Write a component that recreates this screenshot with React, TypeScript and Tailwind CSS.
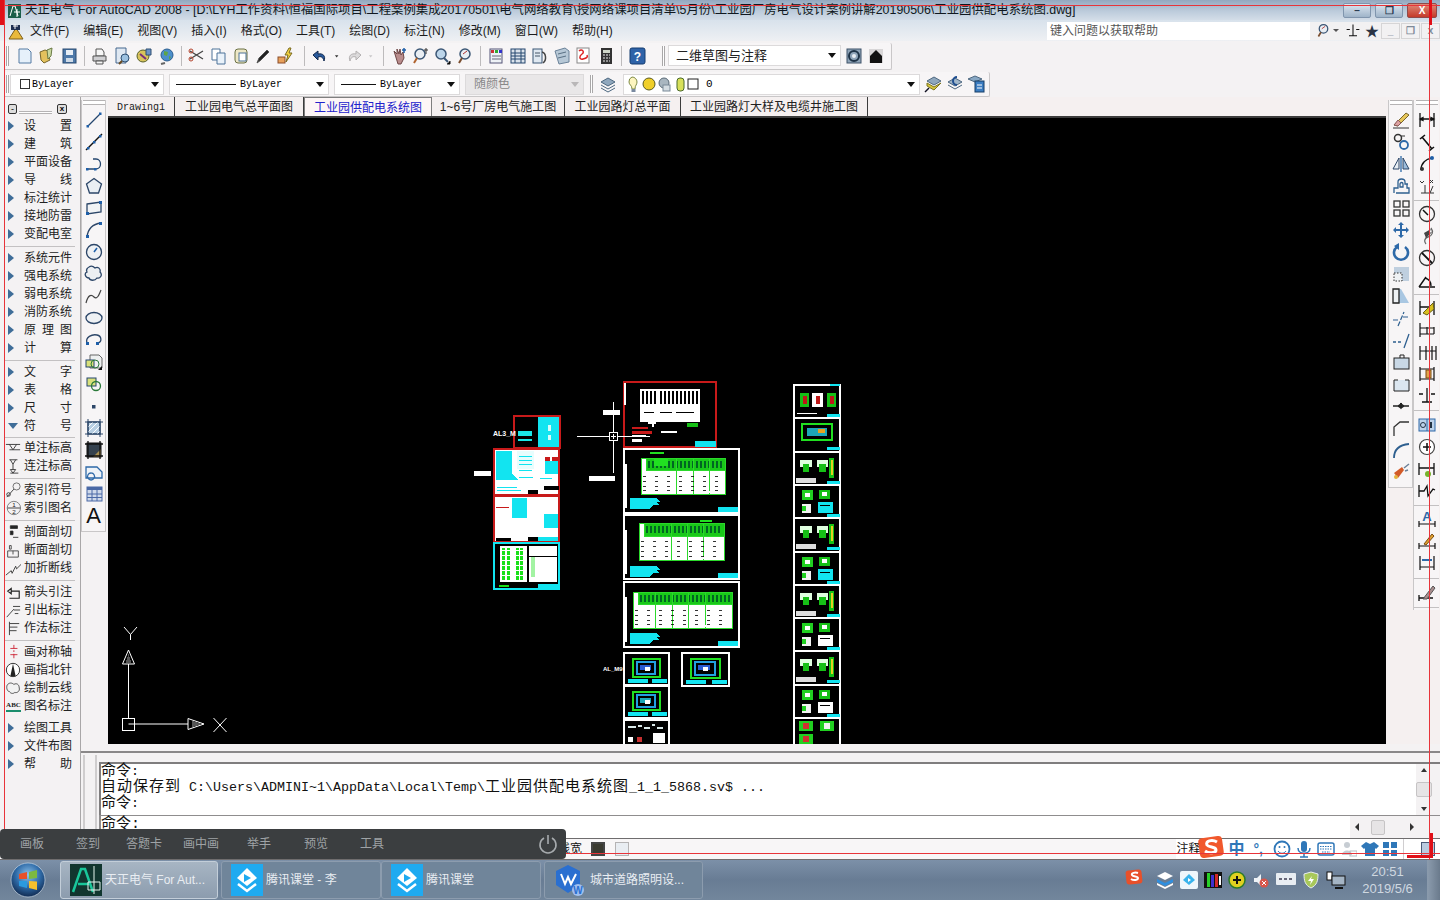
import React from 'react';

const UI = "[font-family:'Liberation_Sans','Noto_Sans_CJK_SC',sans-serif]";
const MONO = "[font-family:'Liberation_Mono','Noto_Sans_CJK_SC',monospace]";

const D = '#24466e';
const B = '#1f5fa8';

// toolbar glyphs, all on a 20x20 box
const glyphs: Record<string, React.ReactNode> = {
    new: <path d="M4 3h9l3 3v11H4z" fill="#e6f0fa" stroke="#557ba3" />,
    open: <><path d="M3 6l5-2 3 1 2 9-6 3-3-3z" fill="#e3c15d" stroke="#77662c" /><path d="M10 4l5-2-1 8-3 3z" fill="#c9d8a0" stroke="#6b7b45" /></>,
    save: <><rect x="4" y="3" width="13" height="14" fill="#4d78a8" stroke="#2a4b70" /><rect x="7" y="4" width="7" height="5" fill="#e8eef5" /><rect x="7" y="12" width="7" height="4" fill="#cfdbe8" /></>,
    print: <><path d="M6 3h6l2 3v4H6z" fill="#f6f6f6" stroke="#555" /><path d="M3 10h13v5H3z" fill="#cfcfd2" stroke="#555" /><path d="M6 15h7v3H6z" fill="#f5f5f5" stroke="#555" /></>,
    preview: <><path d="M4 2h10v15H4z" fill="#dfe8f2" stroke="#46698f" /><circle cx="13" cy="12" r="4" fill="#9cc1e0" stroke="#2f4e70" /><path d="M10 15l-3 3" stroke="#6b4b20" strokeWidth="2" /></>,
    publish: <><circle cx="9" cy="10" r="6" fill="#d9c45b" stroke="#58602c" /><path d="M12 3h5v6h-5z" fill="#6d94c6" stroke="#2f4e70" /><path d="M6 8l6 5" stroke="#7a2d7a" strokeWidth="2" /></>,
    globe: <><circle cx="11" cy="9" r="6" fill="#4c8fcc" stroke="#2a5d8f" /><path d="M8 5l4 1-1 4-3-1zM13 10l2 1-2 3z" fill="#5ea547" /><path d="M9 17l-4 1" stroke="#666" strokeWidth="2" /></>,
    cut: <><path d="M3 5l13 8M3 13l13-8" stroke="#444" strokeWidth="1.3" /><circle cx="4" cy="5" r="2" fill="none" stroke="#b4452f" /><circle cx="4" cy="13" r="2" fill="none" stroke="#b4452f" /></>,
    copy: <><path d="M3 3h8v11H3z" fill="#fff" stroke="#4c7399" /><path d="M8 7h8v11H8z" fill="#eaf2fa" stroke="#4c7399" /></>,
    paste: <><rect x="4" y="3" width="12" height="14" rx="3" fill="#eee8c7" stroke="#6b7045" /><rect x="8" y="7" width="7" height="8" fill="#fff" stroke="#4c7399" /></>,
    match: <path d="M4 17l2-5 8-8 2 2-8 8z" fill="#222" stroke="#555" />,
    bolt: <><rect x="3" y="11" width="7" height="6" fill="#e9a15b" stroke="#8a4d2a" /><path d="M14 2l-4 7h3l-2 7 6-9h-3l2-5z" fill="#f2d13f" stroke="#7a6a20" /></>,
    undo: <path d="M14 15c2-5-1-8-6-7V5L3 9l5 5v-3c3-1 5 0 6 4z" fill="#2a5a9c" stroke="#12294d" />,
    caret: <path d="M7 9h5l-2.500 3z" fill="#333" />,
    redo: <path d="M6 15c-2-5 1-8 6-7V5l5 4-5 5v-3c-3-1-5 0-6 4z" fill="#dcdadb" stroke="#b3b0b1" />,
    caretOff: <path d="M7 9h5l-2.500 3z" fill="#c9c7c8" />,
    pan: <><path d="M5 5l3 3V3l2 5 1-5 1 6 2-3 1 6-3 6H9z" fill="#b98c8c" stroke="#6d4646" /><path d="M15 2v5M13 4h4" stroke={B} strokeWidth="1.500" /></>,
    zoomRt: <><circle cx="9" cy="8" r="5" fill="#e9eef3" stroke="#3b5675" strokeWidth="1.500" /><path d="M6 12l-3 5" stroke="#b0632e" strokeWidth="2" /><path d="M15 2v6M13 4h4" stroke="#333" /></>,
    zoomWin: <><circle cx="8" cy="8" r="5" fill="#bcd5ea" stroke="#3b5675" strokeWidth="1.500" /><path d="M11 12l4 4" stroke="#3b5675" strokeWidth="2" /><path d="M14 18h3v-3" stroke="#111" /></>,
    zoomPrev: <><circle cx="10" cy="8" r="5" fill="#e9eef3" stroke="#3b5675" strokeWidth="1.500" /><path d="M7 12l-3 5" stroke="#7a4d2e" strokeWidth="2" /><path d="M8 8l4-3" stroke="#b02f2f" /></>,
    prop: <><rect x="4" y="3" width="12" height="14" fill="#eef2f6" stroke="#557" /><rect x="5" y="4" width="3" height="3" fill="#c33" /><rect x="9" y="4" width="3" height="3" fill="#3a3" /><rect x="13" y="4" width="3" height="3" fill="#33c" /><path d="M6 10h9M6 13h9" stroke="#667" /></>,
    dc: <><rect x="3" y="3" width="14" height="14" fill="#dbe3ec" stroke={D} /><path d="M3 7h14M3 10h14M3 13h14M7 3v14M13 3v14" stroke={D} /></>,
    palette: <><rect x="3" y="3" width="9" height="14" fill="#dfe8f1" stroke="#3b5675" /><path d="M12 6c4 1 5 8 1 11" fill="none" stroke="#444" strokeWidth="1.500" /><path d="M5 7h5M5 10h5" stroke="#456" /></>,
    sheet: <><path d="M3 5l10-3 4 3v11l-10 2z" fill="#b7c8d6" stroke="#6b8299" /><path d="M6 8l8-2M6 12l8-2" stroke="#5a7084" /></>,
    markup: <><rect x="3" y="2" width="12" height="15" fill="#fff" stroke="#888" /><path d="M5 5c3-3 6 1 3 3s-3 6 1 5 5-2 4-4" fill="none" stroke="#d22" strokeWidth="1.500" /></>,
    calc: <><rect x="5" y="2" width="11" height="16" fill="#333" /><rect x="7" y="4" width="7" height="3" fill="#cfd6c8" /><path d="M7 9h2M10 9h2M13 9h1M7 12h2M10 12h2M13 12h1M7 15h2M10 15h2M13 15h1" stroke="#eee" /></>,
    help: <><rect x="3" y="2" width="15" height="16" rx="2" fill="#2f63a8" stroke="#153c70" /><text x="10.500" y="15" textAnchor="middle" fontSize="12" fontWeight="700" fill="#fff" fontFamily="Liberation Sans">?</text></>,
    gear: <><rect x="3" y="3" width="14" height="14" fill="#8fa4b8" stroke="#3e5368" /><circle cx="10" cy="10" r="5" fill="none" stroke="#1f3347" strokeWidth="2" /><circle cx="10" cy="10" r="2" fill="#e8edf2" /></>,
    home: <><rect x="3" y="3" width="14" height="14" fill="#d8d6d7" /><path d="M4 10l6-6 6 6v7H4z" fill="#111" /></>,
    layerStack: <><path d="M10 4l7 4-7 4-7-4z" fill="#8fa7bd" stroke="#4d6880" /><path d="M3 11l7 4 7-4" fill="none" stroke="#4d6880" /><path d="M3 14l7 4 7-4" fill="none" stroke="#4d6880" /></>,
    layerYellow: <><path d="M11 3l7 4-7 4-7-4z" fill="#8fa7bd" stroke="#4d6880" /><path d="M4 9l7 4 7-4-7 7-7-4z" fill="#d9c83c" stroke="#7b7420" /><path d="M2 18l4-4" stroke="#112" strokeWidth="1.500" /></>,
    layerPrev: <><path d="M10 4l7 4-7 4-7-4z" fill="#9fb5c8" stroke="#4d6880" /><path d="M3 11l7 4 7-4" fill="none" stroke="#4d6880" /><path d="M12 3a4 4 0 1 0 0 8" fill="none" stroke="#1f4e90" strokeWidth="2" /></>,
    layerDoc: <><path d="M8 2l7 3-7 3-7-3z" fill="#88a8c4" stroke="#4d6880" /><rect x="8" y="7" width="9" height="11" fill="#3b7dc1" stroke="#173e66" /><path d="M10 11h5M10 14h5" stroke="#fff" /></>,

    // left drawing strip
    line: <><path d="M4 16L16 4" stroke={D} strokeWidth="1.300" fill="none" /><rect x="2.500" y="15" width="2.500" height="2.500" fill={B} /><rect x="15" y="2.500" width="2.500" height="2.500" fill={B} /></>,
    xline: <><path d="M2 18L18 2" stroke="#111" strokeWidth="1.500" /><rect x="3" y="15" width="2.500" height="2.500" fill={B} /><rect x="15" y="3" width="2.500" height="2.500" fill={B} /><rect x="9" y="9" width="2.500" height="2.500" fill={B} /></>,
    pline: <><path d="M3 15h9c6 0 6-10 0-10H9" fill="none" stroke={D} strokeWidth="1.300" /><rect x="2" y="14" width="2.500" height="2.500" fill={B} /><rect x="10" y="14" width="2.500" height="2.500" fill={B} /></>,
    polygon: <path d="M10 2.500l7.500 5.500-3 9h-9l-3-9z" fill="#e9eef3" stroke="#2c4668" strokeWidth="1.300" />,
    rect: <><path d="M3 6l14-2v10l-14 2z" fill="#f1f3f5" stroke="#2c4668" strokeWidth="1.300" /><rect x="15" y="3" width="3" height="3" fill={B} /><rect x="2" y="14" width="3" height="3" fill={B} /></>,
    arc: <><path d="M3 17C4 8 9 4 17 3" fill="none" stroke="#2c4668" strokeWidth="1.300" /><rect x="2" y="15" width="3" height="3" fill={B} /><rect x="15" y="2" width="3" height="3" fill={B} /></>,
    circle: <><circle cx="10" cy="10" r="7.500" fill="#eef1f4" stroke="#2c4668" strokeWidth="1.300" /><path d="M10 10l3-4" stroke={B} strokeWidth="1.500" /></>,
    cloud: <path d="M5 3c3-2 5 0 6 1 3-2 6 1 5 4 3 3 0 7-3 6-2 3-7 3-8 0-4 0-5-5-2-6-1-2 0-4 2-5z" fill="#eceff2" stroke="#2c4668" strokeWidth="1.300" />,
    spline: <path d="M2 17c2-8 5-9 8-6s5-2 7-7" fill="none" stroke="#444" strokeWidth="1.200" />,
    ellipse: <><ellipse cx="10" cy="10" rx="8" ry="5.500" fill="#eef1f4" stroke="#2c4668" strokeWidth="1.300" /></>,
    ellArc: <><path d="M3 13C1 7 8 4 13 5s5 7 1 8" fill="none" stroke="#2c4668" strokeWidth="1.300" /><rect x="2" y="12" width="3" height="3" fill={B} /><rect x="12" y="12" width="3" height="3" fill={B} /></>,
    insert: <><path d="M6 3h9l3 3v10H6z" fill="#eef0f0" stroke="#666" /><rect x="2" y="8" width="8" height="7" fill="#d8e07a" stroke={D} /><circle cx="11" cy="12" r="4" fill="none" stroke="#2b7a3a" /><path d="M14 18l4-4v4z" fill="#111" /></>,
    block: <><rect x="3" y="4" width="9" height="8" fill="#d8e07a" stroke={D} /><circle cx="12" cy="12" r="4.500" fill="none" stroke="#2b7a3a" strokeWidth="1.300" /></>,
    point: <rect x="8" y="9" width="3.500" height="3.500" fill="#2c4668" />,
    hatch: <><rect x="4" y="4" width="12" height="12" fill="#b9d0e4" stroke="#2c4668" strokeWidth="1.300" /><path d="M4 9l5-5M4 14l10-10M8 16l8-8M13 16l3-3" stroke="#fff" /><path d="M1 4h18M1 16h18M4 1v18M16 1v18" stroke="#2c4668" /></>,
    gradient: <><rect x="3" y="3" width="14" height="14" fill="#35424f" stroke="#111" /><path d="M9 17L17 9v8z" fill="#a88e50" /><path d="M1 4h18M1 16h18M4 1v18M16 1v18" stroke="#111" strokeWidth="1.300" /></>,
    region: <path d="M2 5h11l5 5v6H2z M7 11a3.500 3.500 0 1 0 .1 0" fill="#eef3f8" stroke="#2e69a8" strokeWidth="1.300" />,
    table: <><rect x="3" y="3" width="15" height="14" fill="#cfd9ea" stroke="#4a69a6" /><rect x="3" y="3" width="15" height="3" fill="#4a69a6" /><path d="M3 10h15M3 13.500h15M8 6v11M13 6v11" stroke="#4a69a6" /></>,

    // right modify strip
    erase: <><path d="M3 15L15 3l3 2L7 16z" fill="#e7c65a" stroke="#77662c" /><path d="M3 15l4 1 3-3-3-3z" fill="#dca0a0" stroke="#8a5a5a" /><path d="M2 18h16" stroke="#333" /></>,
    copyObj: <><circle cx="7" cy="6" r="3.500" fill="none" stroke="#333" strokeWidth="1.500" /><circle cx="13" cy="13" r="4" fill="none" stroke="#2e69a8" strokeWidth="1.800" /><path d="M10 4h4" stroke="#333" /></>,
    mirror: <><path d="M10 2v16" stroke="#2e69a8" strokeWidth="1.300" /><path d="M8 4v11H2z" fill="#e9eef3" stroke="#2c4668" /><path d="M12 4v11h6z" fill="#9cbcdb" stroke="#2c4668" /></>,
    offset: <path d="M3 17v-5h4V6c0-4 7-4 7 0v2h3M3 14v-1M5 17h13v-5h-2V8M9 8c0-2 3-2 3 0v3H9z" fill="none" stroke="#2e5f8f" strokeWidth="1.300" />,
    array: <><rect x="3" y="3" width="6" height="6" fill="none" stroke="#333" strokeWidth="1.300" /><rect x="12" y="3" width="6" height="6" fill="none" stroke="#333" strokeWidth="1.300" /><rect x="3" y="12" width="6" height="6" fill="none" stroke="#333" strokeWidth="1.300" /><rect x="12" y="12" width="6" height="6" fill="none" stroke="#333" strokeWidth="1.300" /></>,
    move: <path d="M10 2l3 3h-2v4h4V7l3 3-3 3v-2h-4v4h2l-3 3-3-3h2v-4H5v2l-3-3 3-3v2h4V5H7z" fill="#2e69a8" />,
    rotate: <><path d="M14 5a7 7 0 1 1-8 0" fill="none" stroke="#2e69a8" strokeWidth="2.600" /><path d="M8 1v7L3 4z" fill="#2e69a8" /></>,
    scale: <><rect x="3" y="3" width="15" height="14" fill="#bfcfdf" /><rect x="3" y="9" width="8" height="8" fill="#eef1f4" stroke="#333" strokeDasharray="1.500 1.500" /></>,
    stretch: <><path d="M2 3h8l8 14H2z" fill="#a9c7e2" /><path d="M2 3h6v14H2z" fill="#eef1f4" stroke="#222" strokeWidth="1.300" /></>,
    trim: <path d="M2 12h6M12 9h6M7 18l6-14" stroke="#2e5f8f" strokeWidth="1.200" strokeDasharray="5 1.500" fill="none" />,
    extend: <path d="M2 12h3M7 12h3M13 18l5-14" stroke="#2e5f8f" strokeWidth="1.300" fill="none" />,
    breakP: <><rect x="3" y="6" width="15" height="11" fill="#c9d8e6" stroke="#222" /><path d="M9 6V3h4v3" fill="none" stroke="#222" /></>,
    breakAt: <><path d="M3 6v11h15V6" fill="#dbe6f0" stroke="#222" /><path d="M3 6h4M14 6h4" stroke="#222" /></>,
    join: <path d="M2 10h5M13 10h5M7 10l3-2v4zM13 10l-3-2v4z" fill="#222" stroke="#222" strokeWidth="1.400" />,
    chamfer: <path d="M3 18V9l6-5h9" fill="none" stroke="#333" strokeWidth="1.300" strokeDasharray="0" />,
    fillet: <path d="M3 18c0-9 5-13 15-14" fill="none" stroke="#2e5f8f" strokeWidth="1.800" />,
    explode: <><path d="M3 11l8-6 2 3-6 8z" fill="#d25a28" /><circle cx="5" cy="15" r="2" fill="#e3b23c" /><path d="M13 6l5-4M14 9l3-1" stroke="#6d8299" strokeWidth="1.500" /></>,

    // right dimension strip
    dimLin: <path d="M3 3v14M17 3v14M3 9h14M3 9l3-1.500v3zM17 9l-3-1.500v3z" stroke="#111" strokeWidth="1.300" fill="none" />,
    dimAli: <path d="M3 7l5-4M12 19l5-4M5 5l10 12" stroke="#111" strokeWidth="1.600" fill="none" />,
    dimArc: <><path d="M4 16C4 9 9 5 15 4" fill="none" stroke="#111" strokeWidth="1.500" /><circle cx="15" cy="4" r="2" fill={B} /><circle cx="5" cy="15" r="2" fill="#333" /></>,
    dimOrd: <path d="M4 17h13M8 17V9M13 17l3-7M3 5l2 2 2-2M13 4l3 3M16 4l-3 3" stroke="#333" fill="none" />,
    dimRad: <><circle cx="10" cy="10" r="7.500" fill="none" stroke="#333" strokeWidth="1.300" /><path d="M6 6l5 5" stroke="#111" strokeWidth="1.500" /></>,
    dimJog: <><path d="M14 2c3 4 1 8-3 9s-4 5-2 7" fill="none" stroke="#666" strokeWidth="1.300" /><path d="M7 7l7-4-2 4 3-1-6 6z" fill="#444" /></>,
    dimDia: <><circle cx="10" cy="10" r="7.500" fill="none" stroke="#333" strokeWidth="1.300" /><path d="M5 5l10 10" stroke="#111" strokeWidth="1.800" /></>,
    dimAng: <><path d="M2 17h16M2 17l7-10" stroke="#111" strokeWidth="1.400" fill="none" /><path d="M8 8c4 1 6 4 6 8" fill="none" stroke="#111" strokeWidth="1.300" /></>,
    dimQuick: <><path d="M3 3v14M17 3v14M3 9h14" stroke="#111" strokeWidth="1.300" /><path d="M6 15L16 5l1 6-7 6z" fill="#d8c020" stroke="#6a5f10" /></>,
    dimBase: <path d="M3 3v14M10 7v7M17 7v7M3 8h14M3 14h14" stroke="#111" strokeWidth="1.200" fill="none" />,
    dimCont: <path d="M3 4v14M9 4v14M15 4v14M19 4v14M3 9h16" stroke="#111" strokeWidth="1.200" fill="none" />,
    dimSpace: <><path d="M3 3v14M17 3v14M3 5h14M3 15h14" stroke="#111" strokeWidth="1.200" /><rect x="9" y="6" width="5" height="8" fill="#e3a24a" stroke="#7a4d12" /></>,
    dimBreak: <path d="M10 2v14M5 16h10M2 8h4M14 8h4" stroke="#111" strokeWidth="1.300" fill="none" />,
    tol: <><rect x="2" y="4" width="16" height="12" fill="#bcd2ea" stroke="#2e69a8" /><path d="M10 4v12" stroke="#2e69a8" /><circle cx="6" cy="10" r="2.500" fill="none" stroke="#234" /><path d="M13 7h2v6h-2z" fill="#234" /></>,
    center: <><circle cx="10" cy="10" r="7.500" fill="#fff" stroke="#444" strokeWidth="1.200" /><path d="M10 6v8M6 10h8" stroke="#111" strokeWidth="1.500" /></>,
    inspect: <><path d="M2 4v12M17 4v12M2 9h15" stroke="#111" strokeWidth="1.300" /><circle cx="11" cy="15" r="3" fill="#78b32c" /></>,
    jogLin: <path d="M2 4v12M2 10h5l3-5 1 10 5-7 2 1" stroke="#111" strokeWidth="1.300" fill="none" />,
    dimEditA: <><text x="10" y="12" textAnchor="middle" fontSize="13" fontWeight="700" fill="#2e69a8" fontFamily="Liberation Sans">A</text><path d="M2 12v6M18 12v6M2 15h16" stroke="#111" strokeWidth="1.200" /></>,
    dimEditP: <><path d="M2 12v6M18 12v6M2 15h16" stroke="#111" strokeWidth="1.200" /><path d="M7 13l8-10 2 2-8 9z" fill="#e0a030" stroke="#7a4d12" /></>,
    dimUpd: <><path d="M3 3v14M17 3v14M3 14h14" stroke="#111" strokeWidth="1.200" /><path d="M5 7h10" stroke="#2e69a8" strokeWidth="2" /></>,
    dimStyle: <><path d="M2 12v6M2 15h14" stroke="#111" strokeWidth="1.300" /><path d="M6 16L16 3l2 2-8 11z" fill="#a98e8e" stroke="#555" /></>,
};

function Ic({ n, s = 20 }: { n: string; s?: number }) {
    return <svg width={s} height={s} viewBox="0 0 20 20" className="block shrink-0">{glyphs[n]}</svg>;
}

function Grip() {
    return <div className="flex h-full w-[4px] shrink-0 flex-col items-center py-[3px]"><div className="h-full w-[3px] border-x border-[#a9a7a8] bg-white"></div></div>;
}

function Slots({ names }: { names: string[] }) {
    return (
        <div className="flex items-center gap-[2px]">
            {names.map((n, i) => <Ic key={i} n={n} />)}
        </div>
    );
}

function Sep() {
    return <div className="mx-[5px] h-[20px] w-[1px] shrink-0 bg-[#bdbbbc]"></div>;
}

function Combo({ w, children, caret = true, muted = false }: { w: string; children: React.ReactNode; caret?: boolean; muted?: boolean }) {
    return (
        <div className={`flex h-[21px] shrink-0 items-center justify-between border border-[#dcdadb] px-[4px] ${w} ${muted ? 'bg-[#e9e7e8]' : 'bg-white'}`}>
            <div className="flex items-center">{children}</div>
            {caret && <span className={`h-0 w-0 border-x-[4px] border-t-[5px] border-x-transparent ${muted ? 'border-t-[#b9b7b8]' : 'border-t-[#111]'}`}></span>}
        </div>
    );
}

function WindowButton({ label, red }: { label: string; red?: boolean }) {
    return (
        <div className={`flex h-[15px] items-center justify-center rounded-[2px] border text-[10px] font-bold leading-none ${red ? 'w-[30px] border-[#8f4a4a] bg-[linear-gradient(#e08a78,#c43a2a)] text-white' : 'w-[28px] border-[#8095ad] bg-[linear-gradient(#dce6f0,#9fb4c9)] text-[#2b3d52]'}`}>{label}</div>
    );
}

function TitleBar() {
    return (
        <div className="flex h-[20px] shrink-0 items-center bg-[linear-gradient(#93a8bf,#bccbdb_55%,#d3dde8)] pl-[8px] pr-[3px] pt-[1px]">
            <svg width="13" height="14" viewBox="0 0 13 14" className="shrink-0">
                <rect width="13" height="14" fill="#1b5e4a" />
                <path d="M2 12L5 2h2l3 10M6 8h6M9 5v8" stroke="#fff" fill="none" />
            </svg>
            <span className="ml-[4px] whitespace-nowrap text-[12.400px] text-[#101820]">天正电气 For AutoCAD 2008 - [D:\LYH工作资料\恒福国际项目\工程案例集成20170501\电气网络教育\授网络课项目清单\5月份\工业园厂房电气设计案例讲解20190506\工业园供配电系统图.dwg]</span>
            <div className="ml-auto flex items-center gap-[4px]">
                <WindowButton label="–" />
                <WindowButton label="❐" />
                <WindowButton label="X" red />
            </div>
        </div>
    );
}

const menus = ['文件(F)', '编辑(E)', '视图(V)', '插入(I)', '格式(O)', '工具(T)', '绘图(D)', '标注(N)', '修改(M)', '窗口(W)', '帮助(H)'];

function MenuBar() {
    return (
        <div className="flex h-[21px] shrink-0 items-center bg-[linear-gradient(#d8e2ec,#eef0f3)] pl-[8px]">
            <svg width="16" height="18" viewBox="0 0 16 18" className="shrink-0">
                <path d="M1 17L8 6l7 11z" fill="#e9b93c" stroke="#7d5f1a" />
                <path d="M3 3h9v5H3z" fill="#1f2f52" />
                <path d="M7 2v5M5 4h5" stroke="#fff" />
            </svg>
            <div className="ml-[6px] flex gap-[14px] text-[12px] text-[#1c1c1c]">
                {menus.map(m => <span key={m} className="whitespace-nowrap">{m}</span>)}
            </div>
            <div className="ml-auto flex h-[18px] w-[393px] items-center bg-[#f2f1f2]">
                <div className="flex h-full w-[268px] items-center bg-white pl-[3px] text-[12px] text-[#555]">键入问题以获取帮助</div>
                <div className="ml-[5px] flex items-center gap-[1px]">
                    <Ic n="zoomPrev" s={17} />
                    <span className="h-0 w-0 border-x-[3px] border-t-[3px] border-x-transparent border-t-[#555]"></span>
                    <div className="ml-[5px]"><Ic n="dimBreak" s={16} /></div>
                    <span className="ml-[3px] text-[14px] leading-none text-[#2b3445]">★</span>
                </div>
                <div className="ml-[2px] flex gap-[1px] text-[10px] font-bold leading-none text-[#7f8a99]">
                    <span className="flex h-[16px] w-[19px] items-end justify-center border border-[#d6d5d6] pb-[2px]">_</span>
                    <span className="flex h-[16px] w-[19px] items-center justify-center border border-[#d6d5d6]">❐</span>
                    <span className="flex h-[16px] w-[19px] items-center justify-center border border-[#d6d5d6]">x</span>
                </div>
            </div>
        </div>
    );
}

function ToolbarOne() {
    return (
        <div className="flex h-[29px] shrink-0 items-center bg-[#f4f2f3] pl-[5px] pt-[1px]">
            <div className="flex h-[27px] items-center rounded-r-[2px] border-r border-b border-[#c9c7c8] bg-[#f7f5f6] pr-[5px]">
                <Grip />
                <div className="ml-[6px]"></div>
                <Slots names={['new', 'open', 'save']} />
                <Sep />
                <Slots names={['print', 'preview', 'publish', 'globe']} />
                <Sep />
                <Slots names={['cut', 'copy', 'paste', 'match', 'bolt']} />
                <div className="w-[4px]"></div>
                <Sep />
                <Slots names={['undo']} />
                <Ic n="caret" s={14} />
                <Ic n="redo" />
                <Ic n="caretOff" s={14} />
                <Sep />
                <Slots names={['pan', 'zoomRt', 'zoomWin', 'zoomPrev']} />
                <Sep />
                <Slots names={['prop', 'dc', 'palette', 'sheet', 'markup', 'calc']} />
                <Sep />
                <Slots names={['help']} />
                <div className="w-[14px]"></div>
                <Grip />
                <div className="ml-[3px]"></div>
                <Combo w="w-[173px]"><span className="pl-[3px] text-[13px] text-[#222]">二维草图与注释</span></Combo>
                <div className="ml-[3px]"></div>
                <Slots names={['gear', 'home']} />
            </div>
        </div>
    );
}

function ToolbarTwo() {
    return (
        <div className="flex h-[27px] shrink-0 items-start bg-[#f4f2f3] pl-[5px] pt-[2px]">
            <div className="flex h-[25px] items-center gap-[5px] rounded-r-[2px] border-r border-b border-[#c9c7c8] bg-[#f7f5f6] pr-[2px]">
                <Grip />
                <div className="-ml-[4px]">
                    <Combo w="w-[154px]">
                        <span className="ml-[5px] h-[10px] w-[10px] border border-[#333]"></span>
                        <span className={`ml-[2px] text-[10px] ${MONO}`}>ByLayer</span>
                    </Combo>
                </div>
                <Combo w="w-[160px]">
                    <span className="ml-[2px] h-[1px] w-[60px] bg-[#111]"></span>
                    <span className={`ml-[4px] text-[10px] ${MONO}`}>ByLayer</span>
                </Combo>
                <Combo w="w-[126px]">
                    <span className="ml-[2px] h-[1px] w-[35px] bg-[#111]"></span>
                    <span className={`ml-[4px] text-[10px] ${MONO}`}>ByLayer</span>
                </Combo>
                <Combo w="w-[119px]" muted><span className="pl-[4px] text-[12px] text-[#888]">随颜色</span></Combo>
                <div className="h-full"><Grip /></div>
                <div><Ic n="layerStack" /></div>
                <Combo w="w-[297px]">
                    <svg width="86" height="18" viewBox="0 0 86 18" className="shrink-0">
                        <path d="M4 2a5 5 0 0 1 5 5c0 3-2 3-2 7H4c0-4-3-4-3-7a5 5 0 0 1 3-5z" fill="#fdf5c0" stroke="#7d8a45" />
                        <rect x="3.500" y="14" width="4" height="3" fill="#7a8aa0" />
                        <circle cx="21" cy="9" r="6" fill="#f0cf2a" stroke="#5a5a20" />
                        <circle cx="36" cy="8" r="5" fill="#a9b6c0" stroke="#5a6a78" />
                        <rect x="35" y="10" width="7" height="6" fill="#d4dce2" stroke="#7a8a98" />
                        <rect x="49" y="3" width="7" height="13" rx="3" fill="#d8e05a" stroke="#4b6a2c" />
                        <rect x="60" y="4" width="10" height="10" fill="#fff" stroke="#222" />
                    </svg>
                    <span className={`-ml-[8px] text-[11px] ${MONO}`}>0</span>
                </Combo>
                <div className="-ml-[2px] flex gap-[1px]"><Slots names={['layerYellow', 'layerPrev', 'layerDoc']} /></div>
            </div>
        </div>
    );
}

type Row = { l: string; i?: React.ReactNode };
const arrow = <span className="h-0 w-0 border-y-[5px] border-l-[6px] border-y-transparent border-l-[#3f6d98]"></span>;

const small = (d: React.ReactNode) => <svg width="16" height="16" viewBox="0 0 18 18" className="shrink-0">{d}</svg>;
const panelGroups: Row[][] = [
    [{ l: '设 置' }, { l: '建 筑' }, { l: '平面设备' }, { l: '导 线' }, { l: '标注统计' }, { l: '接地防雷' }, { l: '变配电室' }],
    [{ l: '系统元件' }, { l: '强电系统' }, { l: '弱电系统' }, { l: '消防系统' }, { l: '原 理 图' }, { l: '计 算' }],
    [{ l: '文 字' }, { l: '表 格' }, { l: '尺 寸' }, { l: '符 号', i: <span className="h-0 w-0 border-x-[5px] border-t-[6px] border-x-transparent border-t-[#3f6d98]"></span> }],
    [
        { l: '单注标高', i: small(<path d="M1 5h16M5 5l4 6 4-6M5 11h12" stroke="#333" fill="none" />) },
        { l: '连注标高', i: small(<path d="M5 2h9M6 2l3 5 3-5M9 7v6M6 13l3 4 3-4zM6 17h9" stroke="#333" fill="none" />) },
    ],
    [
        { l: '索引符号', i: small(<><circle cx="13" cy="5" r="4" fill="none" stroke="#666" /><path d="M2 17l8-9" stroke="#333" /><circle cx="4" cy="14" r="2" fill="none" stroke="#333" /></>) },
        { l: '索引图名', i: small(<><circle cx="10" cy="9" r="7.500" fill="none" stroke="#777" /><path d="M3 9h14" stroke="#333" /><text x="10" y="7.500" fontSize="7" textAnchor="middle" fill="#222">1</text><text x="10" y="15.500" fontSize="7" textAnchor="middle" fill="#222">2</text></>) },
    ],
    [
        { l: '剖面剖切', i: small(<path d="M6 2h8v3H6zM6 8h3v4H6zM9 15h6" stroke="#333" fill="#222" />) },
        { l: '断面剖切', i: small(<path d="M5 4h2v4H5zM3 10h12v7H3zM9 10v4" stroke="#444" fill="none" />) },
        { l: '加折断线', i: small(<path d="M1 17l6-5 1 3 4-8 1 3 5-5" stroke="#333" fill="none" />) },
    ],
    [
        { l: '箭头引注', i: small(<path d="M3 8l4-3v6zM7 8h9v8H5" stroke="#222" fill="none" strokeWidth="1.300" />) },
        { l: '引出标注', i: small(<path d="M2 17l8-9M9 5h8M10 9h7M11 13h4" stroke="#333" fill="none" />) },
        { l: '作法标注', i: small(<path d="M5 2v15M5 4h11M5 8h9M5 12h8" stroke="#333" fill="none" />) },
    ],
    [
        { l: '画对称轴', i: small(<path d="M10 1v4M10 7v2M10 11v5M6 5h8M6 12h8" stroke="#c23" fill="none" />) },
        { l: '画指北针', i: small(<><circle cx="9" cy="9" r="7.500" fill="#fff" stroke="#222" /><path d="M9 2l3 14H6z" fill="#222" /></>) },
        { l: '绘制云线', i: small(<path d="M3 5c3-3 6-1 7 0 3-2 6 0 6 4 1 3-2 6-5 5-2 2-5 1-6-1-3 0-4-6-2-8z" fill="#f2f2f2" stroke="#444" />) },
        { l: '图名标注', i: <div className="flex w-[15px] flex-col items-center"><span className="text-[7px] font-bold leading-[9px] text-[#222] [font-family:'Liberation_Serif',serif]">ABC</span><span className="h-[2px] w-[15px] bg-[#1b8d6d]"></span></div> },
    ],
    [{ l: '绘图工具' }, { l: '文件布图' }, { l: '帮 助' }],
];

const sepHeights = ['h-[6px]', 'h-[6px]', 'h-[4px]', 'h-[6px]', 'h-[6px]', 'h-[6px]', 'h-[6px]', 'h-[4px]'];

function LeftPanel() {
    return (
        <div className="flex w-[81px] shrink-0 flex-col border-r border-[#a9a7a8] bg-[#f4f2f3] pl-[5px]">
            <div className="flex h-[20px] shrink-0 items-end pb-[3px]">
                <span className="ml-[3px] flex h-[10px] w-[9px] items-center justify-center rounded-[2px] border border-[#333] bg-[#ddd] text-[9px] leading-none">-</span>
                <div className="mx-[2px] h-[3px] w-[33px] border-y border-[#b5b3b4] bg-white"></div>
                <span className="ml-[3px] flex h-[10px] w-[10px] items-center justify-center rounded-[2px] border border-[#333] bg-[#ddd] text-[8px] font-bold leading-none">x</span>
            </div>
            {panelGroups.map((g, i) => (
                <React.Fragment key={i}>
                    {g.map(r => {
                        const parts = r.l.split(' ');
                        return (
                            <div key={r.l} className="flex h-[18px] shrink-0 items-center">
                                <div className="flex w-[19px] shrink-0 items-center justify-start pl-[3px] [&>svg]:-ml-[3px] [&>div]:-ml-[2px]">{r.i ?? arrow}</div>
                                <div className="flex w-[48px] justify-between text-[12px] leading-none text-[#222]">
                                    {parts.map(p => <span key={p}>{p}</span>)}
                                </div>
                            </div>
                        );
                    })}
                    {i < sepHeights.length && (
                        <div className={`flex shrink-0 items-center ${sepHeights[i]}`}>
                            {i !== 7 && <div className="h-[1px] w-[70px] bg-[#c3c1c2]"></div>}
                        </div>
                    )}
                </React.Fragment>
            ))}
        </div>
    );
}

const leftTools = ['line', 'xline', 'pline', 'polygon', 'rect', 'arc', 'circle', 'cloud', 'spline', 'ellipse', 'ellArc', 'insert', 'block', 'point', 'hatch', 'gradient', 'region', 'table'];
const modTools = ['erase', 'copyObj', 'mirror', 'offset', 'array', 'move', 'rotate', 'scale', 'stretch', 'trim', 'extend', 'breakP', 'breakAt', 'join', 'chamfer', 'fillet', 'explode'];
const dimGroups = [
    ['dimLin', 'dimAli', 'dimArc', 'dimOrd'],
    ['dimRad', 'dimJog', 'dimDia', 'dimAng'],
    ['dimQuick', 'dimBase', 'dimCont', 'dimSpace', 'dimBreak'],
    ['tol', 'center', 'inspect', 'jogLin'],
    ['dimEditA', 'dimEditP', 'dimUpd'],
    ['dimStyle'],
];
const dimSeps = ['h-[6px]', 'h-[6px]', 'h-[7px]', 'h-[6px]', 'h-[8px]', 'h-[6px]'];

function StripGrip() {
    return <div className="mb-[4px] h-[5px] w-[22px] shrink-0 border-y border-[#b5b3b4] bg-white"></div>;
}

function ToolStrip({ names, w, extra }: { names: string[]; w: string; extra?: React.ReactNode }) {
    return (
        <div className={`flex shrink-0 flex-col items-center self-start border-x border-b border-[#c9c7c8] bg-[#f7f5f6] pb-[4px] ${w}`}>
            <StripGrip />
            {names.map((n, i) => <div key={i} className="flex h-[22px] shrink-0 items-center"><Ic n={n} /></div>)}
            {extra}
        </div>
    );
}

function DimStrip() {
    return (
        <div className="flex w-[26px] shrink-0 flex-col items-center self-start border-l border-[#c9c7c8] bg-[#f7f5f6]">
            <StripGrip />
            {dimGroups.map((g, i) => (
                <React.Fragment key={i}>
                    {g.map(n => <div key={n} className="flex h-[22px] shrink-0 items-center"><Ic n={n} /></div>)}
                    <div className={`flex w-full shrink-0 items-center ${dimSeps[i]}`}><div className="h-[1px] w-full bg-[#c3c1c2]"></div></div>
                </React.Fragment>
            ))}
        </div>
    );
}

const tabs = [
    { t: 'Drawing1', w: 'w-[67px]', cls: `text-[10px] ${MONO}` },
    { t: '工业园电气总平面图', w: 'w-[129px]', cls: 'text-[12px]' },
    { t: '工业园供配电系统图', w: 'w-[128px]', cls: 'text-[12px]', active: true },
    { t: '1~6号厂房电气施工图', w: 'w-[133px]', cls: 'text-[12px]' },
    { t: '工业园路灯总平面', w: 'w-[116px]', cls: 'text-[12px]' },
    { t: '工业园路灯大样及电缆井施工图', w: 'w-[187px]', cls: 'text-[12px]' },
];

function Tabs() {
    return (
        <div className="flex h-[21px] shrink-0 border-b-2 border-[#3c3c3c] bg-[#f5f0f0]">
            {tabs.map(t => (
                <div key={t.t} className={`flex shrink-0 items-center justify-center whitespace-nowrap border-r pt-[1px] ${t.w} ${t.cls} ${t.active ? 'border-x border-t border-[#7f7f7f] bg-[#fdf6f6] text-[#2222cc]' : 'border-[#3c3c3c] text-[#222]'}`}>{t.t}</div>
            ))}
        </div>
    );
}

// scale thumbnails on the model space
function PlanTable({ x, y, w, h, split }: { x: number; y: number; w: number; h: number; split: number[] }) {
    return (
        <g>
            <rect x={x} y={y} width={w} height={h} fill="#fff" stroke="#2bd92b" />
            <rect x={x + 5} y={y} width={w - 5} height={h * 0.36} fill="#19c819" stroke="#2bd92b" />
            {Array.from({ length: Math.floor((w - 6) / 4) }).map((_, i) => (
                <rect key={i} x={x + 7 + i * 4} y={y + 3} width={2} height={h * 0.36 - 6} fill="#062" />
            ))}
            {split.map(s => <line key={s} x1={x + s} x2={x + s} y1={y} y2={y + h} stroke="#2bd92b" />)}
            {[0.5, 0.64, 0.78, 0.9].map(f => (
                <line key={f} x1={x + 2} x2={x + w - 2} y1={y + h * f} y2={y + h * f} stroke="#000" strokeDasharray="3 9" strokeWidth="0.800" />
            ))}
        </g>
    );
}

function LargeSheet({ y, h, t, b }: { y: number; h: number; t: { x: number; y: number; w: number; h: number; split: number[] }; b: number }) {
    return (
        <g>
            <rect x={624} y={y} width={115} height={h} fill="#000" stroke="#fff" strokeWidth="2" />
            <rect x={625} y={y + 15} width={2} height={h - 20} fill="#fff" />
            <PlanTable {...t} />
            <path d={`M630 ${b}h26l4 4h-4l3 3h-6l-3 4h-20z`} fill="#12e4f0" />
            <rect x={718} y={y + h - 6} width={20} height={5} fill="#12e4f0" />
            <rect x={700} y={y + h - 22} width={14} height={1.500} fill="#fff" />
        </g>
    );
}

function PlanThumb({ x, y, w, h, fill = '#2a5bd0' }: { x: number; y: number; w: number; h: number; fill?: string }) {
    return (
        <g>
            <rect x={x} y={y} width={w} height={h} fill="#000" stroke="#fff" strokeWidth="1.500" />
            <rect x={x + 9} y={y + 6} width={w - 18} height={h - 14} fill="none" stroke="#21e021" strokeWidth="2" />
            <rect x={x + 13} y={y + 9} width={w - 27} height={h - 20} fill="none" stroke="#22a0e0" strokeWidth="1.500" />
            <rect x={x + 16} y={y + 12} width={w * 0.25} height={5} fill={fill} />
            <rect x={x + 21} y={y + 14} width={5} height={4} fill="#fff" />
            <rect x={x + w - 17} y={y + h - 6} width={15} height={4} fill="#12e4f0" />
            <rect x={x + 4} y={y + h - 6} width={20} height={4} fill="#12e4f0" />
        </g>
    );
}

function Column() {
    const tops = [385, 418, 452, 485, 518, 552, 585, 618, 651, 685, 718];
    return (
        <g>
            <rect x={794} y={385} width={46} height={362} fill="#000" stroke="#fff" strokeWidth="2" />
            {tops.slice(1).map(t => <line key={t} x1={794} x2={840} y1={t} y2={t} stroke="#fff" strokeWidth="1.500" />)}
            {tops.map((t, i) => (
                <g key={t}>
                    {i === 0 && <>
                        <rect x={800} y={393} width={9} height={14} fill="#16c016" /><rect x={803} y={396} width={4} height={8} fill="#c01818" />
                        <rect x={812} y={393} width={11} height={14} fill="#fff" /><rect x={816} y={396} width={4} height={8} fill="#c01818" />
                        <rect x={827} y={393} width={9} height={14} fill="#16c016" /><rect x={830} y={396} width={4} height={8} fill="#c01818" />
                        <rect x={797} y={413} width={20} height={1} fill="#fff" />
                    </>}
                    {i === 1 && <>
                        <rect x={802} y={424} width={30} height={16} fill="none" stroke="#21e021" strokeWidth="2.500" />
                        <rect x={807} y={428} width={20} height={8} fill="#1da5b8" /><rect x={818} y={429} width={7} height={4} fill="#e8a21f" />
                    </>}
                    {i >= 2 && i % 2 === 0 && i < 10 && <>
                        <rect x={800} y={t + 8} width={12} height={7} fill="#dfffdf" /><rect x={803} y={t + 12} width={6} height={8} fill="#16c016" />
                        <rect x={817} y={t + 8} width={11} height={7} fill="#dfffdf" /><rect x={819} y={t + 12} width={7} height={8} fill="#16c016" />
                        <rect x={829} y={t + 6} width={5} height={20} fill="#16c016" /><rect x={830.500} y={t + 8} width={2.500} height={15} fill="#e6d020" />
                        <rect x={796} y={t + 26} width={20} height={5} fill="#dddddd" />
                    </>}
                    {i >= 2 && i % 2 === 1 && i < 10 && <>
                        <rect x={802} y={t + 5} width={11} height={10} fill="#21d021" /><rect x={805} y={t + 8} width={5} height={4} fill="#fff" />
                        <rect x={819} y={t + 5} width={11} height={9} fill="#16c016" /><rect x={822} y={t + 7} width={5} height={4} fill="#fff" />
                        <rect x={802} y={t + 19} width={9} height={9} fill="#f2f2f2" /><rect x={802} y={t + 21} width={4} height={5} fill="#21d021" />
                        <rect x={818} y={t + 17} width={15} height={11} fill={i < 6 ? '#12e4f0' : '#fff'} /><rect x={820} y={t + 20} width={10} height={1} fill="#000" />
                    </>}
                    {i === 10 && <>
                        <rect x={799} y={t + 3} width={14} height={10} fill="#21d021" /><rect x={803} y={t + 5} width={6} height={6} fill="#d03030" />
                        <rect x={820} y={t + 3} width={14} height={10} fill="#21d021" /><rect x={824} y={t + 5} width={6} height={6} fill="#f2f2f2" />
                        <rect x={799} y={t + 16} width={14} height={10} fill="#21d021" /><rect x={803} y={t + 18} width={6} height={6} fill="#d03030" />
                    </>}
                    {i < 10 && <rect x={827} y={t + 29} width={13} height={3} fill="#12e4f0" />}
                </g>
            ))}
            <rect x={830} y={384} width={10} height={1.500} fill="#12e4f0" />
        </g>
    );
}

function Drawing() {
    return (
        <svg viewBox="108 118 1278 626" width="1278" height="626" shapeRendering="crispEdges" className="block">
            <rect x="108" y="118" width="1278" height="626" fill="#000" />

            {/* UCS icon */}
            <g stroke="#fff" fill="none" shapeRendering="auto">
                <rect x="122.500" y="718.500" width="12" height="12" />
                <path d="M128.500 718V664M128.500 724H188" />
                <path d="M128.500 650l-6 14h12zM188 718.500l16 5.500-16 5.500z" />
                <path d="M124 627l6.500 7.500 6.500-7.500M130.500 634.500V640M213.500 718l13 14M226.500 718l-13 14" />
            </g>
            <path d="M128.500 654l-3 9h6zM192 721l9 3-9 3z" fill="#555" />

            {/* left group */}
            <rect x="514" y="416" width="46" height="32" fill="#000" stroke="#c81a1a" strokeWidth="2" />
            <rect x="538" y="417" width="21" height="30" fill="#12e4f0" />
            <rect x="518" y="431" width="14" height="5" fill="#1ae8e8" />
            <rect x="518" y="439" width="14" height="2" fill="#1ae8e8" />
            <rect x="548" y="425" width="3" height="6" fill="#d8fbfb" />
            <rect x="548" y="435" width="3" height="5" fill="#d8fbfb" />
            <text x="493" y="436" fontSize="7" fontWeight="700" fill="#fff" fontFamily="Liberation Sans">AL3_M</text>

            <rect x="494" y="449" width="65" height="46" fill="#fff" stroke="#c81a1a" strokeWidth="2" />
            <path d="M496 451h16v22l6 7h-22z" fill="#12e4f0" />
            <rect x="517" y="451" width="17" height="18" fill="#e8fdfd" />
            <path d="M519 456h13M519 460h13M519 464h13M519 470h13M519 477h14" stroke="#12e4f0" />
            <rect x="545" y="461" width="13" height="13" fill="#12e4f0" />
            <rect x="545" y="457" width="13" height="4" fill="#c81a1a" />
            <rect x="550" y="457" width="2" height="4" fill="#fff" />
            <rect x="544" y="486" width="15" height="4" fill="#000" />
            <rect x="528" y="490" width="10" height="4" fill="#000" />
            <path d="M497 490h24M497 487h20M540 478h12" stroke="#12e4f0" />

            <rect x="494" y="496" width="65" height="46" fill="#fff" stroke="#c81a1a" strokeWidth="2" />
            <rect x="512" y="498" width="15" height="20" fill="#12e4f0" />
            <rect x="544" y="514" width="14" height="14" fill="#12e4f0" />
            <rect x="496" y="507" width="13" height="1" fill="#c81a1a" />
            <rect x="496" y="538" width="15" height="3" fill="#000" />
            <rect x="528" y="537" width="10" height="4" fill="#000" />
            <rect x="538" y="537" width="20" height="4" fill="#12e4f0" />

            <rect x="494" y="543" width="65" height="46" fill="#000" stroke="#12e4f0" strokeWidth="2" />
            <rect x="500" y="546" width="27" height="36" fill="#fff" />
            {[502, 507, 516, 520].map(cx => <rect key={cx} x={cx} y={548} width={3} height={32} fill="#1ae01a" />)}
            {[550, 555, 560, 565, 570, 575].map(cy => <rect key={cy} x={500} y={cy} width={27} height={1} fill="#fff" />)}
            <rect x="529" y="546" width="28" height="36" fill="#fff" />
            <rect x="529" y="556" width="28" height="1" fill="#000" />
            <rect x="531" y="557" width="4" height="20" fill="#1ae01a" opacity="0.400" />
            <rect x="538" y="584" width="21" height="5" fill="#12e4f0" />
            <rect x="499" y="585" width="10" height="1.500" fill="#1ae01a" />

            <rect x="474" y="471" width="17" height="5" fill="#fff" />
            <rect x="603" y="410" width="17" height="5" fill="#fff" />
            <rect x="589" y="476" width="26" height="5" fill="#fff" />

            {/* middle group */}
            <rect x="624" y="382" width="92" height="65" fill="#000" stroke="#c81a1a" strokeWidth="2" />
            <rect x="624" y="383" width="2" height="22" fill="#fff" />
            <rect x="640" y="389" width="60" height="33" fill="#fff" />
            {[642, 646, 650, 654, 660, 664, 668, 672, 676, 680, 684, 688, 692, 696].map(v => <rect key={v} x={v} y={391} width={2} height={13} fill="#000" />)}
            <path d="M644 412h10M660 412h12M676 412h18" stroke="#000" />
            <rect x="648" y="422" width="8" height="2" fill="#fff" />
            <rect x="652" y="424" width="2" height="3" fill="#fff" />
            <rect x="687" y="423" width="11" height="4" fill="#16c016" />
            <rect x="632" y="427" width="16" height="2" fill="#c81a1a" />
            <rect x="632" y="431" width="20" height="3" fill="#c81a1a" />
            <rect x="632" y="435" width="14" height="2" fill="#fff" />
            <rect x="632" y="439" width="10" height="3" fill="#fff" />
            <rect x="661" y="431" width="16" height="2" fill="#fff" />
            <rect x="695" y="441" width="21" height="6" fill="#12e4f0" />

            <LargeSheet y={449} h={64} t={{ x: 641, y: 458, w: 84, h: 36, split: [35, 52, 68] }} b={498} />
            <rect x="650" y="452" width="14" height="1.500" fill="#21e021" />
            <rect x="654" y="458" width="14" height="8" fill="#21e021" />
            <LargeSheet y={515} h={64} t={{ x: 639, y: 523, w: 85, h: 37, split: [32, 48, 64] }} b={566} />
            <rect x="700" y="520" width="12" height="1.500" fill="#21e021" />
            <LargeSheet y={582} h={65} t={{ x: 633, y: 592, w: 99, h: 36, split: [22, 39, 55, 72] }} b={633} />

            <PlanThumb x={624} y={653} w={45} h={32} />
            <text x="603" y="671" fontSize="6" fontWeight="700" fill="#fff" fontFamily="Liberation Sans">AL_M9</text>
            <PlanThumb x={682} y={653} w={47} h={33} />
            <PlanThumb x={624} y={686} w={45} h={32} fill="#1aa8b8" />
            <rect x="624" y="720" width="45" height="26" fill="#000" stroke="#fff" strokeWidth="1.500" />
            <path d="M628 727h8M638 726h4M644 728h6M652 725h3M657 728h6" stroke="#d8e8e8" strokeWidth="2" />
            <rect x="628" y="737" width="5" height="5" fill="#fff" />
            <rect x="637" y="737" width="5" height="5" fill="#c83030" />
            <rect x="653" y="733" width="12" height="10" fill="#fff" />

            <Column />

            {/* crosshair */}
            <path d="M613.500 402V473M577 436.500H650" stroke="#fff" />
            <rect x="609.500" y="432.500" width="8" height="8" fill="#000" stroke="#fff" />
            <path d="M611 436.500h5M613.500 434v5" stroke="#fff" />
        </svg>
    );
}

function CommandArea() {
    return (
        <div className="flex h-[94px] shrink-0 flex-col bg-[#f4f2f3]">
            <div className="mt-[7px] flex h-[87px] border-t-2 border-[#8a8889]">
                <div className="mx-[2px] mt-[2px] h-full w-[14px] shrink-0 border-x-2 border-[#cfcdce]"></div>
                <div className="flex flex-1 flex-col pt-[9px]">
                    <div className="flex h-[53px] border-t-2 border-l-2 border-[#7f7d7e] text-[#111]">
                        <div className={`flex-1 bg-white text-[13.330px] ${MONO}`}>
                            <div className="h-[16px] leading-[16px]"><span className="text-[15px]">命令</span>:</div>
                            <div className="h-[16px] whitespace-nowrap leading-[16px]"><span className="text-[15px] tracking-[1px]">自动保存到</span> C:\Users\ADMINI~1\AppData\Local\Temp\<span className="text-[15px] tracking-[1px]">工业园供配电系统图</span>_1_1_5868.sv$ ...</div>
                            <div className="h-[16px] leading-[16px]"><span className="text-[15px]">命令</span>:</div>
                        </div>
                        <div className="flex w-[16px] shrink-0 flex-col items-center justify-between bg-[#f4f2f3] py-[4px]">
                            <span className="h-0 w-0 border-x-[3px] border-b-[4px] border-x-transparent border-b-[#333]"></span>
                            <span className="h-[15px] w-full rounded-[2px] border border-[#c6c4c5] bg-[#e6e4e5]"></span>
                            <span className="h-0 w-0 border-x-[3px] border-t-[4px] border-x-transparent border-t-[#333]"></span>
                        </div>
                        <div className="w-[8px] shrink-0"></div>
                    </div>
                    <div className="flex flex-1 border-t border-l-2 border-[#8f8d8e]">
                        <div className={`flex-1 bg-white pt-[1px] text-[15px] leading-[16px] text-[#111] ${MONO}`}>命令:</div>
                        <div className="flex w-[90px] shrink-0 items-center gap-[5px] bg-[#f4f2f3] pl-[5px]">
                            <span className="h-0 w-0 border-y-[4px] border-r-[4px] border-y-transparent border-r-[#333]"></span>
                            <span className="ml-[7px] h-[15px] w-[14px] rounded-[2px] border border-[#c6c4c5] bg-[#e6e4e5]"></span>
                            <span className="ml-[20px] h-0 w-0 border-y-[4px] border-l-[4px] border-y-transparent border-l-[#333]"></span>
                        </div>
                    </div>
                </div>
            </div>
        </div>
    );
}

function StatusBar() {
    return (
        <div className="flex h-[22px] shrink-0 items-center border-y border-[#6f6d6e] bg-[#f8f6f7] text-[12px] text-[#111]">
            <div className="ml-[558px] w-[24px] whitespace-nowrap">线宽</div>
            <div className="ml-[9px] h-[14px] w-[14px] border-2 border-[#444] bg-[#3a3a30]"></div>
            <div className="ml-[10px] h-[14px] w-[14px] border border-[#b5b3b4] bg-[#e9edf2]"></div>
            <div className="ml-auto flex h-full items-center bg-white">
                <span className="-mr-[3px] w-[24px] whitespace-nowrap">注释</span>
                <svg width="28" height="26" viewBox="0 0 28 26" className="-mt-[5px] shrink-0">
                    <rect x="2" y="3" width="24" height="20" rx="4" transform="rotate(-8 14 13)" fill="#f1582c" />
                    <path d="M20 8c-5-3-12-1-10 3 2 3 9 1 9 5 0 3-7 4-11 1" fill="none" stroke="#fff" strokeWidth="3" />
                </svg>
                <span className="ml-[3px] text-[16px] font-bold leading-none text-[#2f77b8]">中</span>
                <span className="ml-[9px] text-[14px] font-bold leading-none text-[#2f77b8]">°,</span>
                <svg width="20" height="20" viewBox="0 0 20 20" className="ml-[9px]"><circle cx="10" cy="10" r="7.500" fill="#fff" stroke="#2f77b8" strokeWidth="1.800" /><circle cx="7.500" cy="8" r="1" fill="#2f77b8" /><circle cx="12.500" cy="8" r="1" fill="#2f77b8" /><path d="M6 12c2 3 6 3 8 0" fill="none" stroke="#2f77b8" /></svg>
                <svg width="18" height="20" viewBox="0 0 18 20" className="ml-[3px]"><rect x="6" y="2" width="6" height="11" rx="3" fill="#2f77b8" /><path d="M3 9c0 7 12 7 12 0M9 15v3M5 18h8" fill="none" stroke="#2f77b8" strokeWidth="1.500" /></svg>
                <svg width="18" height="14" viewBox="0 0 18 14" className="ml-[4px]"><rect x="1" y="1" width="16" height="12" rx="2" fill="#fff" stroke="#2f77b8" strokeWidth="1.500" /><path d="M3 4.500h12M3 7h12M5 10h8" stroke="#2f77b8" strokeDasharray="1.500 1" /></svg>
                <svg width="16" height="18" viewBox="0 0 16 18" className="ml-[6px]"><circle cx="6" cy="5" r="3" fill="#c7cdd3" /><path d="M1 15c0-6 10-6 10 0z" fill="#c7cdd3" /><rect x="9" y="11" width="7" height="5" fill="none" stroke="#b5bbc1" /></svg>
                <svg width="18" height="16" viewBox="0 0 18 16" className="ml-[4px]"><path d="M5 1l4 2 4-2 5 4-3 3-1-1v8H4V7L3 8 0 5z" fill="#2f77b8" /></svg>
                <svg width="14" height="14" viewBox="0 0 14 14" className="ml-[4px]"><rect x="0" y="0" width="6" height="6" fill="#2f77b8" /><rect x="8" y="0" width="6" height="6" fill="#2f77b8" /><rect x="0" y="8" width="6" height="6" fill="#2f77b8" /><rect x="8" y="8" width="6" height="6" fill="#2f77b8" /></svg>
                <div className="ml-[6px] flex h-full w-[37px] items-center justify-end border-l border-[#d0ced0] pr-[5px]">
                    <div className="h-[14px] w-[14px] border border-[#4a5a78] bg-[#b9cbe0]"></div>
                </div>
            </div>
        </div>
    );
}

function TencentIcon() {
    return (
        <svg width="32" height="32" viewBox="0 0 32 32" className="shrink-0">
            <rect width="32" height="32" fill="#1faaf0" />
            <path d="M16 4l10 10-10 8L6 14z" fill="#fff" />
            <path d="M13 10l7 4-7 4z" fill="#1faaf0" />
            <path d="M7 20l9 7 9-7" fill="none" stroke="#fff" strokeWidth="2.500" />
        </svg>
    );
}

function Taskbar() {
    return (
        <div className="flex h-[40px] shrink-0 items-stretch bg-[linear-gradient(#7c90a8,#687c94_50%,#72869c)] text-[12px] text-[#e9edf2]">
            <div className="flex w-[60px] shrink-0 items-center justify-start pl-[9px]">
                <svg width="38" height="38" viewBox="0 0 38 38" className="shrink-0">
                    <defs>
                        <radialGradient id="orb" cx="50%" cy="35%" r="60%">
                            <stop offset="0%" stopColor="#8fc4ec" />
                            <stop offset="60%" stopColor="#2f6ba8" />
                            <stop offset="100%" stopColor="#16355f" />
                        </radialGradient>
                    </defs>
                    <circle cx="19" cy="19" r="17" fill="url(#orb)" stroke="#dbe6f0" strokeOpacity="0.600" />
                    <path d="M10 13l8-2v7h-8z" fill="#e8502a" />
                    <path d="M20 11l8-2v8l-8 1z" fill="#7cb940" />
                    <path d="M10 20h8v7l-8-2z" fill="#2a9ae0" />
                    <path d="M20 20l8 .500V29l-8-2z" fill="#f6c02c" />
                </svg>
            </div>
            <div className="my-[1px] flex w-[158px] items-center rounded-[3px] border border-[#c3ced9] bg-[linear-gradient(#a7b5c3,#8c9cae)] pl-[9px]">
                <svg width="32" height="32" viewBox="0 0 32 32" className="shrink-0">
                    <rect width="32" height="32" fill="#11362f" />
                    <path d="M3 28L11 5h4l8 23M8 20h11" fill="none" stroke="#19c79a" strokeWidth="2.500" />
                    <path d="M24 2v28M18 18h12v8H18z" fill="none" stroke="#e4f4ee" />
                </svg>
                <span className="ml-[3px] whitespace-nowrap">天正电气 For Aut...</span>
            </div>
            <div className="my-[1px] ml-[3px] flex w-[160px] items-center rounded-[3px] border border-[#8c9cae] bg-[#70859a] pl-[9px]">
                <TencentIcon />
                <span className="ml-[3px] whitespace-nowrap">腾讯课堂 - 李</span>
            </div>
            <div className="my-[1px] flex w-[160px] items-center rounded-[3px] border border-[#8c9cae] bg-[#70859a] pl-[9px]">
                <TencentIcon />
                <span className="ml-[3px] whitespace-nowrap">腾讯课堂</span>
            </div>
            <div className="my-[1px] ml-[3px] flex w-[159px] items-center rounded-[3px] border border-[#8c9cae] bg-[#70859a] pl-[9px]">
                <svg width="32" height="32" viewBox="0 0 32 32" className="shrink-0">
                    <path d="M14 1l12 6v14l-12 8-12-8V7z" fill="#2a6fd0" />
                    <path d="M7 10l4 10 3-7 3 7 5-10" fill="none" stroke="#fff" strokeWidth="2" />
                    <circle cx="24" cy="26" r="6" fill="#9fc0f0" />
                    <text x="24" y="30" textAnchor="middle" fontSize="10" fontWeight="700" fill="#2a6fd0" fontFamily="Liberation Sans">W</text>
                </svg>
                <span className="ml-[4px] whitespace-nowrap">城市道路照明设...</span>
            </div>
            <div className="ml-auto flex items-center">
                <svg width="20" height="20" viewBox="0 0 20 20" className="-mt-[4px]"><rect x="2" y="2" width="16" height="14" rx="3" transform="rotate(-6 10 9)" fill="#e8502a" /><path d="M14 5c-3-1-7 0-6 2 1 2 6 1 6 3s-4 3-7 1" fill="none" stroke="#fff" strokeWidth="2" /></svg>
                <div className="ml-[12px] flex items-center gap-[6px]">
                    <svg width="18" height="20" viewBox="0 0 18 20"><path d="M9 2l8 4-8 4-8-4z" fill="#fff" /><path d="M1 9l8 4 8-4v3l-8 4-8-4z" fill="#2f8fe0" /><path d="M1 13l8 4 8-4v2l-8 4-8-4z" fill="#fff" /></svg>
                    <svg width="18" height="18" viewBox="0 0 18 18"><rect width="18" height="18" rx="2" fill="#eef6fb" /><path d="M9 3l6 6-6 5-6-5z" fill="#39b3ec" /><path d="M8 7l3 2-3 2z" fill="#fff" /></svg>
                    <svg width="18" height="16" viewBox="0 0 18 16"><rect width="18" height="16" fill="#111" /><rect x="3" y="1" width="3" height="14" fill="#28d028" /><rect x="7" y="3" width="3" height="12" fill="#4030d0" /><rect x="11" y="2" width="3" height="13" fill="#d02828" /><rect x="15" y="4" width="2" height="9" fill="#fff" /></svg>
                    <svg width="18" height="18" viewBox="0 0 18 18"><circle cx="9" cy="9" r="8" fill="#e0d020" stroke="#2a7a2a" strokeWidth="1.500" /><path d="M9 5v8M5 9h8" stroke="#111" strokeWidth="2" /></svg>
                    <svg width="18" height="18" viewBox="0 0 18 18"><path d="M2 7h3l4-4v12l-4-4H2z" fill="#eef2f6" /><circle cx="12" cy="12" r="4.500" fill="#d8564a" /><path d="M10 10l4 4M14 10l-4 4" stroke="#fff" /></svg>
                    <svg width="20" height="14" viewBox="0 0 20 14"><rect width="20" height="12" rx="1" fill="#e8edf2" /><path d="M3 6h3M8 6h3M13 6h3" stroke="#667" strokeWidth="2" /></svg>
                    <svg width="18" height="18" viewBox="0 0 18 18"><path d="M9 1l7 2c0 7-1 11-7 14C3 14 2 10 2 3z" fill="#a8c85a" stroke="#e8edf2" /><path d="M10 5L6 10h3l-1 4 4-6H9z" fill="#fff" /></svg>
                    <svg width="20" height="18" viewBox="0 0 20 18"><rect x="1" y="1" width="5" height="8" fill="#fff" stroke="#111" /><rect x="6" y="5" width="13" height="9" fill="#a4b4c4" stroke="#111" /><path d="M9 17h8" stroke="#111" strokeWidth="2" /></svg>
                </div>
                <div className="ml-[8px] flex w-[67px] flex-col items-center text-[13px] leading-[17px] text-[#cfd8e0]">
                    <span>20:51</span>
                    <span>2019/5/6</span>
                </div>
                <div className="ml-[6px] h-full w-[13px] border-l border-[#8a9aac] bg-[linear-gradient(90deg,#8a9aac,#6a7a8c)]"></div>
            </div>
        </div>
    );
}

const barItems = [
    { t: '画板', w: 'w-[56px]' }, { t: '签到', w: 'w-[56px]' }, { t: '答题卡', w: 'w-[56px]' }, { t: '画中画', w: 'w-[58px]' },
    { t: '举手', w: 'w-[58px]' }, { t: '预览', w: 'w-[56px]' }, { t: '工具', w: 'w-[56px]' },
];

export default function App() {
    return (
        <div className={`relative flex h-[900px] w-[1440px] flex-col overflow-hidden bg-[#f4f2f3] ${UI}`}>
            <TitleBar />
            <MenuBar />
            <ToolbarOne />
            <ToolbarTwo />
            <div className="flex min-h-0 flex-1">
                <LeftPanel />
                <div className="flex min-w-0 flex-1 flex-col">
                    <div className="flex h-[647px] shrink-0">
                        <div className="flex w-[27px] shrink-0 pt-[3px]">
                            <ToolStrip
                                names={leftTools}
                                w="w-[25px]"
                                extra={<span className="flex h-[22px] shrink-0 items-center text-[22px] leading-none text-[#111]">A</span>}
                            />
                        </div>
                        <div className="flex w-[1278px] shrink-0 flex-col">
                            <Tabs />
                            <Drawing />
                        </div>
                        <div className="flex flex-1 bg-[#f5f0f0] pl-[2px] pt-[3px]">
                            <ToolStrip names={modTools} w="w-[25px]" />
                            <DimStrip />
                        </div>
                    </div>
                    <CommandArea />
                </div>
            </div>
            <StatusBar />
            <Taskbar />

            {/* classroom floating bar */}
            <div className="absolute left-0 top-[829px] flex h-[30px] w-[566px] items-center rounded-[4px] bg-[#3b3e40] pl-[4px] text-[12px] text-[#9fa3a6]">
                {barItems.map(b => <span key={b.t} className={`text-center ${b.w}`}>{b.t}</span>)}
                <svg width="22" height="22" viewBox="0 0 22 22" className="ml-auto mr-[7px]">
                    <path d="M7 5a8 8 0 1 0 8 0M11 2v9" fill="none" stroke="#a7abae" strokeWidth="1.600" />
                </svg>
            </div>

            {/* screen recorder frame */}
            <div className="absolute left-[4px] top-0 h-[829px] w-[1px] bg-[#e8343a]"></div>
            <div className="absolute left-[1429px] top-0 h-[860px] w-[1px] bg-[#e8343a]"></div>
            <div className="absolute left-0 top-[5px] h-[1px] w-[1440px] bg-[#e8343a]"></div>
            <div className="absolute left-[566px] top-[853px] h-[1px] w-[874px] bg-[#e8343a]"></div>
            <div className="absolute left-0 top-0 h-[25px] w-[4px] bg-[#e01018]"></div>
            <div className="absolute left-[1429px] top-0 h-[25px] w-[3px] bg-[#e01018]"></div>
            <div className="absolute left-[1430px] top-[833px] h-[24px] w-[3px] bg-[#e01018]"></div>
            <div className="absolute left-[1407px] top-[855px] h-[3px] w-[26px] bg-[#e01018]"></div>
        </div>
    );
}
